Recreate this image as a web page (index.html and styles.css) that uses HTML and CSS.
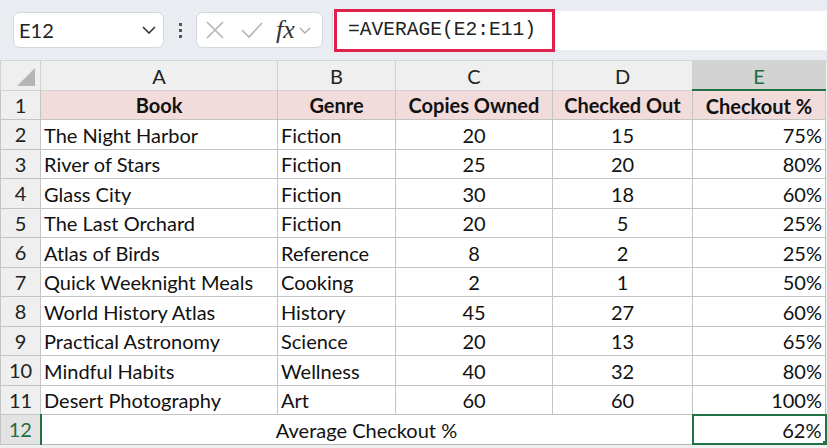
FILE: index.html
```html
<!DOCTYPE html>
<html lang="en">
<head>
    <meta charset="UTF-8">
    <title>Library Checkout</title>
    <link rel="stylesheet" href="styles.css">
</head>
<body>
    <div class="toolbar">
        <div class="name-box">
            <span>E12</span>
            <svg class="chev" width="14" height="8" viewBox="0 0 14 8"><path d="M1 1l6 6 6-6" fill="none" stroke="#333" stroke-width="1.6"/></svg>
        </div>
        <div class="grip"><i></i><i></i><i></i></div>
        <div class="fx-box">
            <svg width="20" height="20" viewBox="0 0 20 20"><path d="M2 2l16 16M18 2L2 18" stroke="#b3b3b3" stroke-width="1.6"/></svg>
            <svg width="22" height="18" viewBox="0 0 22 18"><path d="M1 9l7 7L21 2" fill="none" stroke="#b3b3b3" stroke-width="1.6"/></svg>
            <span class="fx">fx</span>
            <svg class="chev-sm" width="12" height="7" viewBox="0 0 12 7"><path d="M1 1l5 5 5-5" fill="none" stroke="#aaa" stroke-width="1.4"/></svg>
        </div>
        <div class="formula">
            <span class="formula-text">=AVERAGE(E2:E11)</span>
        </div>
    </div>

    <table class="sheet">
        <colgroup>
            <col class="c-hdr"><col class="c-a"><col class="c-b"><col class="c-c"><col class="c-d"><col class="c-e"><col class="c-end">
        </colgroup>
        <tr class="col-heads">
            <th class="corner"><span class="tri"></span></th>
            <th>A</th><th>B</th><th>C</th><th>D</th><th class="sel">E</th><th class="end"></th>
        </tr>
        <tr class="titles">
            <th class="rn">1</th>
            <td>Book</td><td>Genre</td><td>Copies Owned</td><td>Checked Out</td><td>Checkout %</td><td class="end"></td>
        </tr>
        <tr><th class="rn">2</th><td>The Night Harbor</td><td>Fiction</td><td class="mid">20</td><td class="mid">15</td><td class="num">75%</td><td class="end"></td></tr>
        <tr><th class="rn">3</th><td>River of Stars</td><td>Fiction</td><td class="mid">25</td><td class="mid">20</td><td class="num">80%</td><td class="end"></td></tr>
        <tr><th class="rn">4</th><td>Glass City</td><td>Fiction</td><td class="mid">30</td><td class="mid">18</td><td class="num">60%</td><td class="end"></td></tr>
        <tr><th class="rn">5</th><td>The Last Orchard</td><td>Fiction</td><td class="mid">20</td><td class="mid">5</td><td class="num">25%</td><td class="end"></td></tr>
        <tr><th class="rn">6</th><td>Atlas of Birds</td><td>Reference</td><td class="mid">8</td><td class="mid">2</td><td class="num">25%</td><td class="end"></td></tr>
        <tr><th class="rn">7</th><td>Quick Weeknight Meals</td><td>Cooking</td><td class="mid">2</td><td class="mid">1</td><td class="num">50%</td><td class="end"></td></tr>
        <tr><th class="rn">8</th><td>World History Atlas</td><td>History</td><td class="mid">45</td><td class="mid">27</td><td class="num">60%</td><td class="end"></td></tr>
        <tr><th class="rn">9</th><td>Practical Astronomy</td><td>Science</td><td class="mid">20</td><td class="mid">13</td><td class="num">65%</td><td class="end"></td></tr>
        <tr><th class="rn">10</th><td>Mindful Habits</td><td>Wellness</td><td class="mid">40</td><td class="mid">32</td><td class="num">80%</td><td class="end"></td></tr>
        <tr><th class="rn">11</th><td>Desert Photography</td><td>Art</td><td class="mid">60</td><td class="mid">60</td><td class="num">100%</td><td class="end"></td></tr>
        <tr class="total">
            <th class="rn sel-row">12</th>
            <td colspan="4" class="mid">Average Checkout %</td>
            <td class="num active">62%<span class="handle"></span></td><td class="end"></td>
        </tr>
    </table>
</body>
</html>
```

FILE: styles.css
```css
* {
    margin: 0;
    padding: 0;
    box-sizing: border-box;
}

body {
    width: 827px;
    height: 448px;
    overflow: hidden;
    background: #efefef;
    font-family: Lato, 'Open Sans', sans-serif;
    color: #111;
}

/* formula bar */
.toolbar {
    height: 61px;
    background: #e9ecf0;
    display: flex;
    align-items: center;
    padding-left: 13px;
    border-bottom: 1px solid #d4d4d4;
}

.name-box {
    width: 151px;
    height: 36px;
    background: #fff;
    border: 1px solid #d3d6da;
    border-radius: 7px;
    display: flex;
    align-items: center;
    justify-content: space-between;
    padding: 0 7px 0 5px;
    font-size: 20px;
    color: #222;
}

.grip {
    width: 32px;
    display: flex;
    flex-direction: column;
    align-items: center;
    gap: 3px;
}

.grip i {
    width: 3px;
    height: 3px;
    background: #555;
}

.fx-box {
    width: 127px;
    height: 36px;
    background: #fff;
    border: 1px solid #d3d6da;
    border-radius: 7px;
    display: flex;
    align-items: center;
    padding: 0 4px 0 8px;
}

.fx-box svg:first-child {
    margin-right: 16px;
}

.fx-box .fx {
    font-family: 'Liberation Serif', serif;
    font-style: italic;
    font-size: 26px;
    color: #333;
    margin-left: 13px;
    margin-right: 4px;
    line-height: 1;
}

.formula {
    flex: 1;
    height: 39px;
    margin-left: 9px;
    background: #fff;
    border-left: 1px solid #d3d6da;
    position: relative;
}

.formula-text {
    position: absolute;
    left: 1px;
    top: -2px;
    width: 221px;
    height: 43px;
    border: 3px solid #e0204c;
    padding: 7px 0 0 11px;
    font-family: 'Liberation Mono', monospace;
    font-size: 19.6px;
    color: #222;
}

/* grid */
.sheet {
    border-collapse: collapse;
    table-layout: fixed;
    width: 827px;
    font-size: 20px;
}

.c-hdr { width: 40px; }
.c-a { width: 237px; }
.c-b { width: 118px; }
.c-c { width: 157px; }
.c-d { width: 140px; }
.c-e { width: 133px; }
.c-end { width: 2px; }

.sheet th,
.sheet td {
    border: 1px solid #c4c4c4;
    height: 29.5px;
    padding: 1px 3px 0;
    white-space: nowrap;
    overflow: hidden;
    font-weight: normal;
    line-height: 1;
}

.sheet td {
    background: #fff;
}

.col-heads th {
    height: 29px;
    background: #efefef;
    text-align: center;
    color: #222;
    border-color: #d2d2d2;
    border-top: none;
    font-size: 20px;
}

.col-heads th.sel {
    background: #d3d3d3;
    color: #1e6e42;
    border-bottom: 2px solid #217346;
}

.corner {
    position: relative;
}

.tri {
    position: absolute;
    right: 5px;
    bottom: 4px;
    width: 0;
    height: 0;
    border-left: 18px solid transparent;
    border-bottom: 18px solid #b5b5b5;
}

.rn {
    background: #efefef;
    text-align: center;
    color: #222;
    font-size: 20px;
    padding: 0 !important;
}

.rn.sel-row {
    background: #e3e3e3;
    color: #1e6e42;
    border-right: 2px solid #217346;
}

.titles td {
    background: #f2dcdb;
    font-weight: bold;
    text-align: center;
}

.mid {
    text-align: center;
}

.num {
    text-align: right;
}

.sheet .end {
    background: #efefef;
    border: none;
    padding: 0;
}

.total td {
    border-bottom: 1px solid #b5b5b5;
}

.sheet td.active {
    position: relative;
    border: 2px solid #217346;
}

.handle {
    position: absolute;
    right: -4px;
    bottom: -4px;
    width: 7px;
    height: 7px;
    background: #217346;
    border: 1px solid #fff;
}
```
